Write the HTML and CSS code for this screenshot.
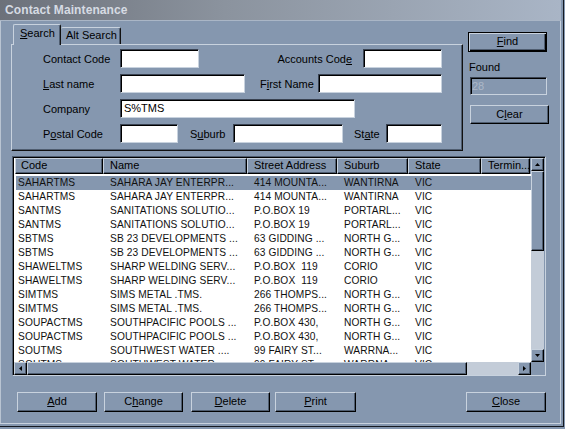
FILE: index.html
```html
<!DOCTYPE html>
<html>
<head>
<meta charset="utf-8">
<link rel="stylesheet" href="styles.css">
</head>
<body>
<div class="window">
  <div class="titlebar">Contact Maintenance</div>
  <div class="main">
    <div class="top">
      <div class="tabgroup">
        <div class="tabs">
          <div class="tab active"><u>S</u>earch</div>
          <div class="tab alt">Alt Search</div>
        </div>
        <div class="panel">
          <div class="row">
            <span class="lbl">Contact Code</span>
            <div class="field w79"></div>
            <span class="lbl2 accl">Accounts Cod<u>e</u></span>
            <div class="field w79"></div>
          </div>
          <div class="row">
            <span class="lbl"><u>L</u>ast name</span>
            <div class="field w125"></div>
            <span class="lbl2 firstl">F<u>i</u>rst Name</span>
            <div class="field w124"></div>
          </div>
          <div class="row">
            <span class="lbl">Company</span>
            <div class="field w235">S%TMS</div>
          </div>
          <div class="row">
            <span class="lbl">P<u>o</u>stal Code</span>
            <div class="field w58"></div>
            <span class="lbl2 subl">S<u>u</u>burb</span>
            <div class="field w110"></div>
            <span class="lbl2 statel">St<u>a</u>te</span>
            <div class="field w56"></div>
          </div>
        </div>
      </div>
      <div class="side">
        <div class="btn default find"><u>F</u>ind</div>
        <div class="found-lbl">Found</div>
        <div class="field disabled found">28</div>
        <div class="btn clear">C<u>l</u>ear</div>
      </div>
    </div>

    <div class="list">
      <div class="view">
        <div class="header">
          <div class="hc c1">Code</div>
          <div class="hc c2">Name</div>
          <div class="hc c3">Street Address</div>
          <div class="hc c4">Suburb</div>
          <div class="hc c5">State</div>
          <div class="hc c6">Termin...</div>
        </div>
        <div class="rows">
          <div class="r sel"><span class="d c1">SAHARTMS</span><span class="d c2">SAHARA JAY ENTERPR...</span><span class="d c3">414 MOUNTA...</span><span class="d c4">WANTIRNA</span><span class="d c5">VIC</span></div>
          <div class="r"><span class="d c1">SAHARTMS</span><span class="d c2">SAHARA JAY ENTERPR...</span><span class="d c3">414 MOUNTA...</span><span class="d c4">WANTIRNA</span><span class="d c5">VIC</span></div>
          <div class="r"><span class="d c1">SANTMS</span><span class="d c2">SANITATIONS SOLUTIO...</span><span class="d c3">P.O.BOX 19</span><span class="d c4">PORTARL...</span><span class="d c5">VIC</span></div>
          <div class="r"><span class="d c1">SANTMS</span><span class="d c2">SANITATIONS SOLUTIO...</span><span class="d c3">P.O.BOX 19</span><span class="d c4">PORTARL...</span><span class="d c5">VIC</span></div>
          <div class="r"><span class="d c1">SBTMS</span><span class="d c2">SB 23 DEVELOPMENTS ...</span><span class="d c3">63 GIDDING ...</span><span class="d c4">NORTH G...</span><span class="d c5">VIC</span></div>
          <div class="r"><span class="d c1">SBTMS</span><span class="d c2">SB 23 DEVELOPMENTS ...</span><span class="d c3">63 GIDDING ...</span><span class="d c4">NORTH G...</span><span class="d c5">VIC</span></div>
          <div class="r"><span class="d c1">SHAWELTMS</span><span class="d c2">SHARP WELDING SERV...</span><span class="d c3">P.O.BOX&nbsp; 119</span><span class="d c4">CORIO</span><span class="d c5">VIC</span></div>
          <div class="r"><span class="d c1">SHAWELTMS</span><span class="d c2">SHARP WELDING SERV...</span><span class="d c3">P.O.BOX&nbsp; 119</span><span class="d c4">CORIO</span><span class="d c5">VIC</span></div>
          <div class="r"><span class="d c1">SIMTMS</span><span class="d c2">SIMS METAL .TMS.</span><span class="d c3">266 THOMPS...</span><span class="d c4">NORTH G...</span><span class="d c5">VIC</span></div>
          <div class="r"><span class="d c1">SIMTMS</span><span class="d c2">SIMS METAL .TMS.</span><span class="d c3">266 THOMPS...</span><span class="d c4">NORTH G...</span><span class="d c5">VIC</span></div>
          <div class="r"><span class="d c1">SOUPACTMS</span><span class="d c2">SOUTHPACIFIC POOLS ...</span><span class="d c3">P.O.BOX 430,</span><span class="d c4">NORTH G...</span><span class="d c5">VIC</span></div>
          <div class="r"><span class="d c1">SOUPACTMS</span><span class="d c2">SOUTHPACIFIC POOLS ...</span><span class="d c3">P.O.BOX 430,</span><span class="d c4">NORTH G...</span><span class="d c5">VIC</span></div>
          <div class="r"><span class="d c1">SOUTMS</span><span class="d c2">SOUTHWEST WATER ....</span><span class="d c3">99 FAIRY ST...</span><span class="d c4">WARRNA...</span><span class="d c5">VIC</span></div>
          <div class="r"><span class="d c1">SOUTMS</span><span class="d c2">SOUTHWEST WATER ....</span><span class="d c3">99 FAIRY ST...</span><span class="d c4">WARRNA...</span><span class="d c5">VIC</span></div>
        </div>
      </div>
      <div class="vscroll">
        <div class="sbtn"><svg width="5" height="3" viewBox="0 0 5 3"><polygon points="2.5,0 5,3 0,3"/></svg></div>
        <div class="vthumb"></div>
        <div class="track"></div>
        <div class="sbtn"><svg width="5" height="3" viewBox="0 0 5 3"><polygon points="0,0 5,0 2.5,3"/></svg></div>
      </div>
      <div class="hscroll">
        <div class="sbtn"><svg width="3" height="5" viewBox="0 0 3 5"><polygon points="3,0 3,5 0,2.5"/></svg></div>
        <div class="hthumb"></div>
        <div class="track"></div>
        <div class="sbtn"><svg width="3" height="5" viewBox="0 0 3 5"><polygon points="0,0 3,2.5 0,5"/></svg></div>
      </div>
      <div class="corner"></div>
    </div>

    <div class="actions">
      <div class="btn add"><u>A</u>dd</div>
      <div class="btn change">C<u>h</u>ange</div>
      <div class="btn delete"><u>D</u>elete</div>
      <div class="btn print"><u>P</u>rint</div>
      <div class="btn close"><u>C</u>lose</div>
    </div>
  </div>
</div>
</body>
</html>
```

FILE: styles.css
```css
* { box-sizing: border-box; }

body {
  margin: 0;
  background: #8597af;
  font-family: "Liberation Sans", Arial, sans-serif;
  font-size: 11px;
  color: #000;
}

.window {
  width: 564px;
  height: 427px;
  background: #8597af;
  box-shadow: inset -1px -1px 0 #151a22, inset -3px -3px 0 #8597af, inset -4px -4px 0 #c8d2de, inset 1px 0 0 #b9c4d2;
}

.titlebar {
  width: 561px;
  height: 21px;
  padding-left: 5px;
  background: linear-gradient(90deg, #6c717a 0%, #8b939e 40%, #a9b5c6 100%);
  border-bottom: 1px solid #aab6c6;
  color: #d6dbe3;
  font-weight: bold;
  font-size: 12px;
  line-height: 20px;
  letter-spacing: 0.1px;
}

.main {
  padding: 3px 0 0 11px;
}

.top {
  display: flex;
}

.tabgroup {
  width: 452px;
}

.tabs {
  display: flex;
  align-items: flex-end;
  height: 20px;
  padding-left: 2px;
}

.tab {
  height: 17px;
  border-top: 1px solid #c8d2de;
  border-right: 1px solid #111;
  border-radius: 2px 2px 0 0;
  box-shadow: inset -1px 0 0 #4f5d70;
  line-height: 15px;
  padding-left: 5px;
  font-size: 11px;
}

.tab.active {
  position: relative;
  z-index: 1;
  width: 48px;
  height: 21px;
  margin-bottom: -1px;
  border-left: 1px solid #c8d2de;
  background: #8597af;
  padding-left: 6px;
  line-height: 17px;
}

.tab.alt {
  width: 60px;
  padding-left: 5px;
}

.panel {
  height: 107px;
  border: 1px solid;
  border-color: #c8d2de #111 #111 #c8d2de;
  box-shadow: inset -1px -1px 0 #4f5d70;
  padding: 4px 0 0 31px;
}

.row {
  display: flex;
  align-items: center;
  height: 19px;
  margin-bottom: 6px;
}

.lbl {
  width: 77px;
  white-space: nowrap;
}

.lbl2 {
  white-space: nowrap;
}

.accl { width: 164px; text-align: right; padding-right: 11px; }
.firstl { width: 73px; padding-left: 15px; }
.subl { width: 55px; padding-left: 12px; }
.statel { width: 43px; padding-left: 11px; }

.field {
  height: 19px;
  background: #fff;
  border: 1px solid;
  border-color: #3a4352 #c8d2de #c8d2de #3a4352;
  box-shadow: inset 1px 1px 0 #000;
  padding: 0 0 0 3px;
  line-height: 17px;
  white-space: nowrap;
}

.w58 { width: 58px; }
.w56 { width: 56px; }
.w79 { width: 79px; }
.w110 { width: 110px; }
.w124 { width: 124px; }
.w125 { width: 125px; }
.w235 { width: 235px; }

.side {
  display: flex;
  flex-direction: column;
  align-items: flex-start;
  margin-left: 4px;
  padding-top: 8px;
}

.btn {
  height: 20px;
  background: #8597af;
  border: 1px solid;
  border-color: #c8d2de #000 #000 #c8d2de;
  box-shadow: inset -1px -1px 0 #4f5d70;
  text-align: center;
  line-height: 17px;
  white-space: nowrap;
}

.btn.default {
  border: 1px solid #000;
  box-shadow: inset 1px 1px 0 #c8d2de, inset -1px -1px 0 #000, inset -2px -2px 0 #4f5d70;
}

.find { width: 79px; margin-left: 1px; }

.found-lbl {
  margin: 9px 0 0 2px;
  height: 13px;
  line-height: 13px;
}

.field.disabled {
  background: #8597af;
  color: #adb8c7;
  margin: 3px 0 0 3px;
  width: 77px;
  height: 18px;
  line-height: 16px;
  padding-left: 1px;
}

.clear { width: 79px; margin: 10px 0 0 3px; height: 19px; }

/* list view */
.list {
  margin: 5px 0 0 1px;
  width: 534px;
  height: 220px;
  border: 1px solid;
  border-color: #4f5d70 #c8d2de #c8d2de #4f5d70;
  box-shadow: inset 1px 1px 0 #000;
  display: grid;
  grid-template-columns: 517px 13px;
  grid-template-rows: 204px 13px;
  padding: 1px 0 0 1px;
}

.view {
  background: #fff;
  overflow: hidden;
  padding-left: 1px;
}

.header {
  display: flex;
  height: 16px;
  background: #8597af;
}

.hc {
  height: 16px;
  border: 1px solid;
  border-color: #c8d2de #000 #000 #c8d2de;
  box-shadow: inset -1px -1px 0 #4f5d70;
  line-height: 13px;
  padding-left: 6px;
  white-space: nowrap;
  overflow: hidden;
  flex: none;
}

.hc.c1 { padding-left: 5px; }

.c1 { width: 88px; }
.c2 { width: 144px; }
.c3 { width: 90px; }
.c4 { width: 71px; }
.c5 { width: 73px; }
.c6 { width: 49px; }

.rows {
  padding: 2px 0 0 1px;
}

.r {
  display: flex;
  height: 14px;
  line-height: 14px;
  font-size: 10.2px;
  letter-spacing: 0.1px;
  color: #111;
}

.r.sel {
  background: #8597af;
}

.d {
  flex: none;
  white-space: nowrap;
  overflow: hidden;
  padding-left: 7px;
}

.d.c1 { width: 87px; padding-left: 2px; }

.vscroll {
  display: flex;
  flex-direction: column;
  background: #c3ccd8;
}

.hscroll {
  display: flex;
  background: #c3ccd8;
}

.sbtn {
  flex: none;
  width: 13px;
  height: 13px;
  background: #8597af;
  border: 1px solid;
  border-color: #c8d2de #000 #000 #c8d2de;
  box-shadow: inset -1px -1px 0 #4f5d70;
  display: flex;
  align-items: center;
  justify-content: center;
}

.sbtn svg { display: block; fill: #000; }

.vthumb {
  height: 80px;
  flex: none;
  background: #8597af;
  border: 1px solid;
  border-color: #c8d2de #000 #000 #c8d2de;
  box-shadow: inset -1px -1px 0 #4f5d70;
}

.hthumb {
  width: 440px;
  flex: none;
  background: #8597af;
  border: 1px solid;
  border-color: #c8d2de #000 #000 #c8d2de;
  box-shadow: inset -1px -1px 0 #4f5d70;
}

.track { flex: 1; }

.corner { background: #8597af; }

/* bottom buttons */
.actions {
  display: flex;
  width: 535px;
  margin-top: 16px;
  padding-left: 6px;
}

.add { width: 80px; }
.change { width: 79px; margin-left: 7px; }
.delete { width: 79px; margin-left: 8px; }
.print { width: 81px; margin-left: 5px; }
.close { width: 80px; margin-left: auto; }
```
